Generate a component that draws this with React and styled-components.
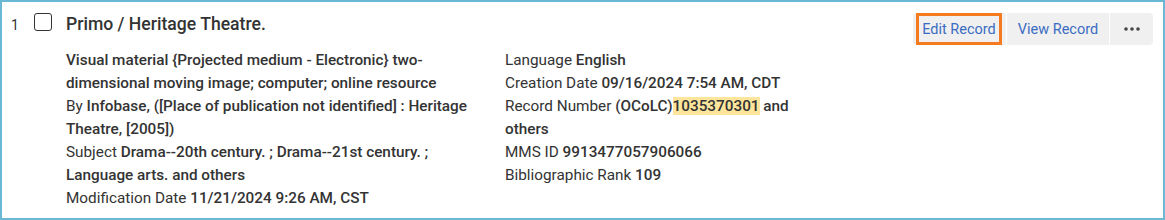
import styled, { createGlobalStyle } from "styled-components";

const GlobalStyle = createGlobalStyle`
  html, body {
    margin: 0;
    padding: 0;
    background: #fff;
  }
  body {
    font-family: Roboto, "Liberation Sans", Arial, sans-serif;
    color: #333;
  }
`;

const Card = styled.div`
  box-sizing: border-box;
  width: 1165px;
  height: 220px;
  border: 2px solid #6ab8d4;
  padding: 9px 10px 0 9px;
  display: flex;
  align-items: flex-start;
`;

const Index = styled.div`
  width: 23px;
  font-size: 14px;
  line-height: 20px;
  padding-top: 4px;
  color: #333;
`;

const Checkbox = styled.span`
  box-sizing: border-box;
  display: block;
  width: 18px;
  height: 18px;
  margin-top: 2px;
  margin-right: 14px;
  border: 1.5px solid #333;
  border-radius: 3px;
  background: #fff;
`;

const Content = styled.div`
  flex: 1;
`;

const Title = styled.div`
  font-size: 17.6px;
  font-weight: 500;
  line-height: 24px;
  padding-top: 1px;
  color: #333;
`;

const Details = styled.div`
  display: grid;
  grid-template-columns: 410px 300px;
  column-gap: 29px;
  margin-top: 13px;
  font-size: 15.3px;
  line-height: 23px;
`;

const Column = styled.div`
  display: flex;
  flex-direction: column;
`;

const Line = styled.div``;

const Value = styled.span`
  font-weight: 500;
  background: ${(p) => (p.highlight ? "#fde69c" : "transparent")};
`;

const Actions = styled.div`
  display: flex;
  gap: 1px;
  margin-top: 2px;
  border-radius: 4px;
  overflow: hidden;
`;

const Cell = styled.div`
  box-sizing: border-box;
  width: ${(p) => p.width}px;
  height: 32px;
  padding-left: ${(p) => p.inset || 0}px;
  background: #f0f0f0;
  display: flex;
`;

const ActionButton = styled.button`
  box-sizing: border-box;
  width: ${(p) => (p.width ? `${p.width}px` : "100%")};
  height: 32px;
  border: ${(p) => (p.focused ? "3px solid #f47b20" : "0")};
  margin: 0;
  padding: 0;
  background: transparent;
  color: #3b6cc3;
  font-family: Roboto, "Liberation Sans", Arial, sans-serif;
  font-size: 14.5px;
  cursor: pointer;
  display: flex;
  align-items: center;
  justify-content: center;
`;

const Dots = () => (
  <svg width="16" height="4" viewBox="0 0 16 4">
    <circle cx="2" cy="2" r="1.8" fill="#444" />
    <circle cx="8" cy="2" r="1.8" fill="#444" />
    <circle cx="14" cy="2" r="1.8" fill="#444" />
  </svg>
);

export default function App() {
  return (
    <>
      <GlobalStyle />
      <Card>
        <Index>1</Index>
        <Checkbox />
        <Content>
          <Title>Primo / Heritage Theatre.</Title>
          <Details>
            <Column>
              <Line>
                <Value>
                  Visual material {"{"}Projected medium - Electronic{"}"} two-dimensional moving
                  image; computer; online resource
                </Value>
              </Line>
              <Line>
                By <Value>Infobase, ([Place of publication not identified] : Heritage Theatre, [2005])</Value>
              </Line>
              <Line>
                Subject <Value>Drama--20th century. ; Drama--21st century. ; Language arts. and others</Value>
              </Line>
              <Line>
                Modification Date <Value>11/21/2024 9:26 AM, CST</Value>
              </Line>
            </Column>
            <Column>
              <Line>
                Language <Value>English</Value>
              </Line>
              <Line>
                Creation Date <Value>09/16/2024 7:54 AM, CDT</Value>
              </Line>
              <Line>
                Record Number <Value>(OCoLC)</Value>
                <Value highlight>1035370301</Value> <Value>and others</Value>
              </Line>
              <Line>
                MMS ID <Value>9913477057906066</Value>
              </Line>
              <Line>
                Bibliographic Rank <Value>109</Value>
              </Line>
            </Column>
          </Details>
        </Content>
        <Actions>
          <Cell width={93} inset={3}>
            <ActionButton focused width={86}>Edit Record</ActionButton>
          </Cell>
          <Cell width={102}>
            <ActionButton>View Record</ActionButton>
          </Cell>
          <Cell width={43}>
            <ActionButton>
              <Dots />
            </ActionButton>
          </Cell>
        </Actions>
      </Card>
    </>
  );
}
